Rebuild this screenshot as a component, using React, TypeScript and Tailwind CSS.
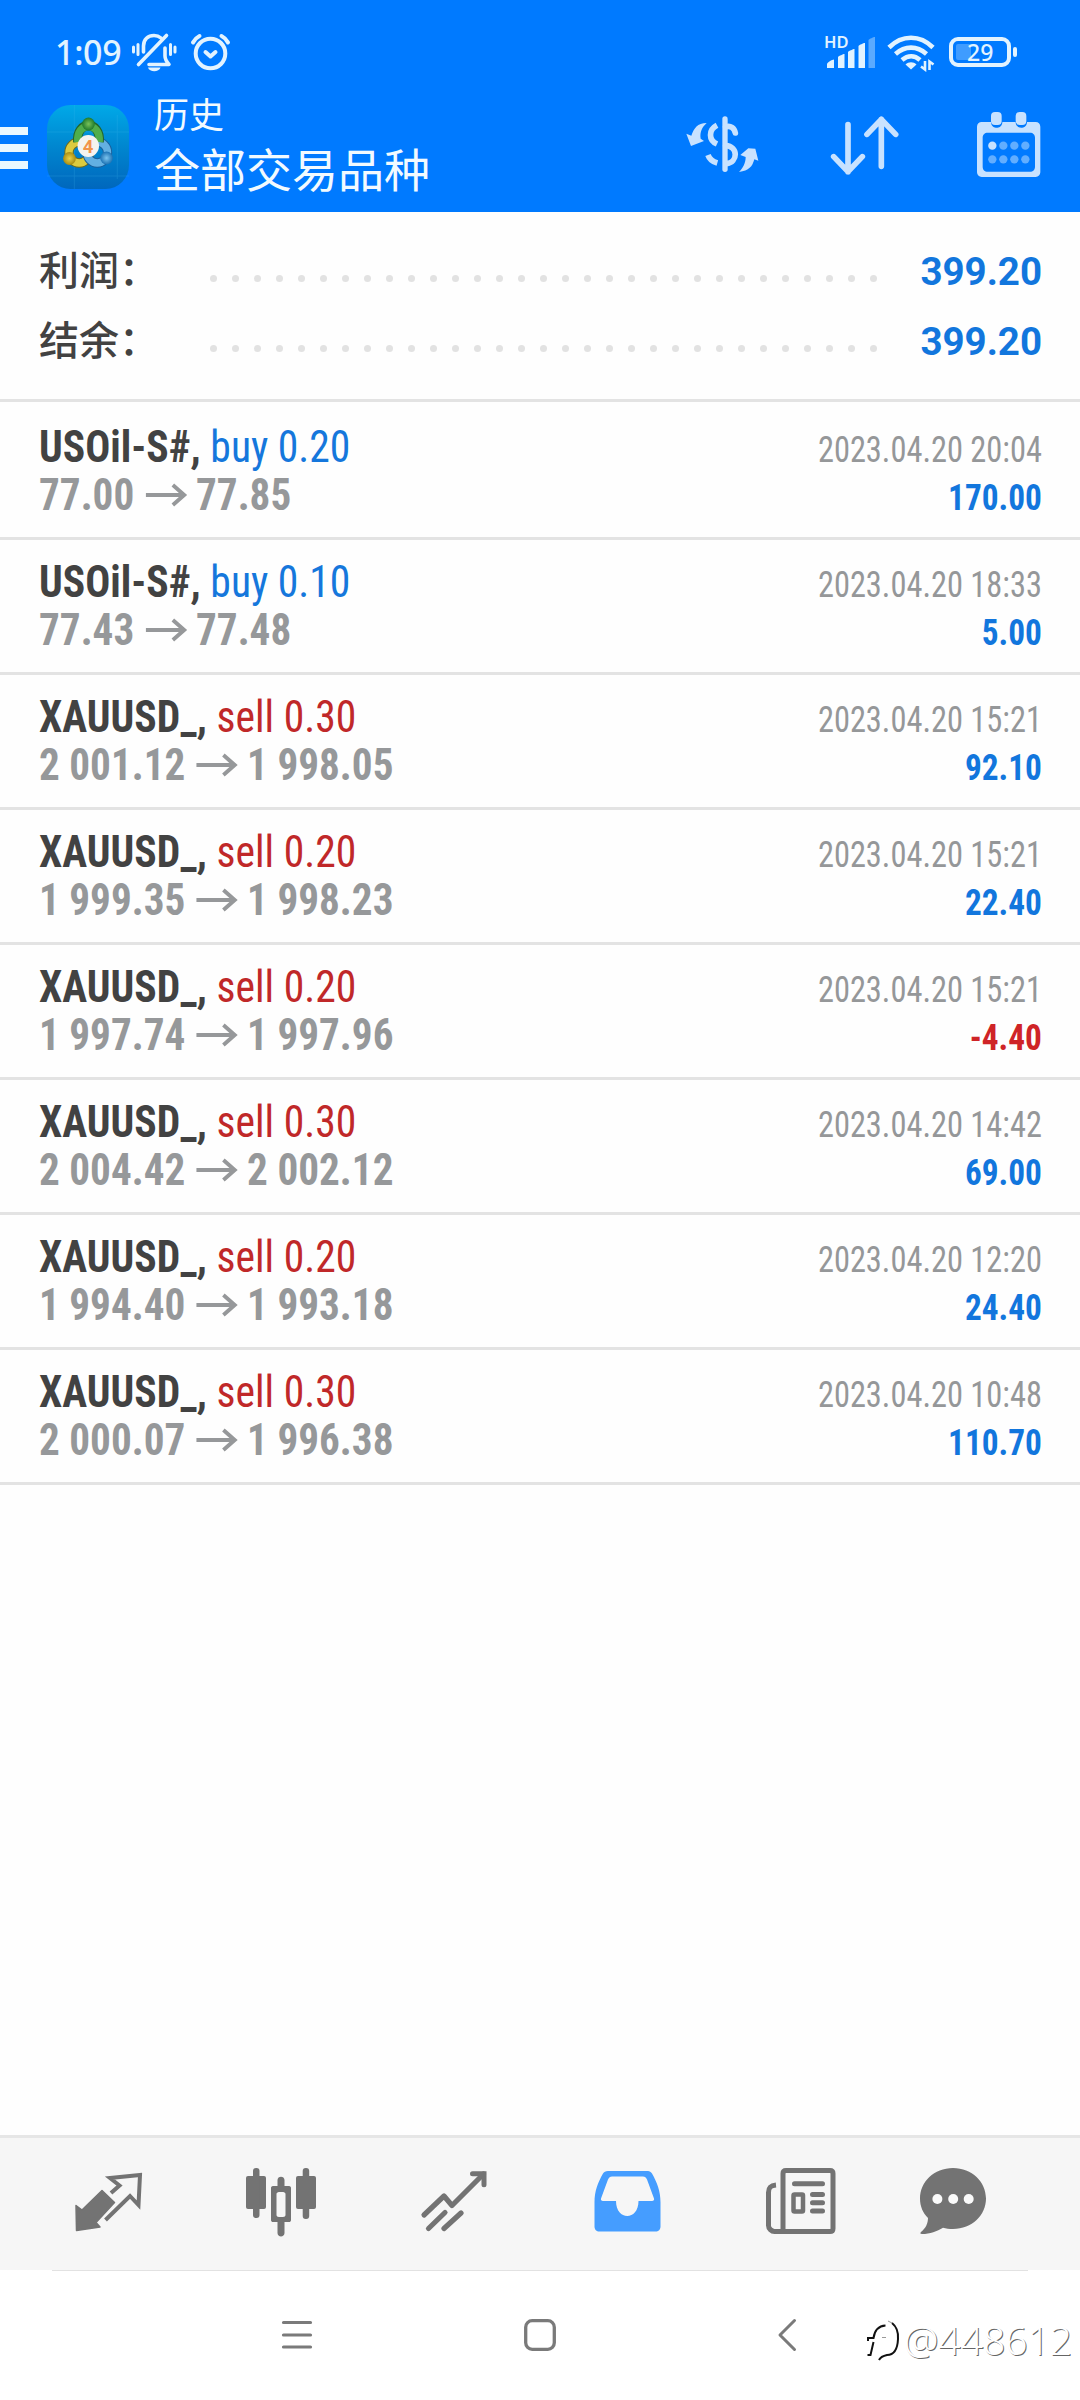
import React from "react";

interface Deal {
  symbol: string;
  side: "buy" | "sell";
  volume: string;
  open: string;
  close: string;
  time: string;
  profit: string;
}

const deals: Deal[] = [
  { symbol: "USOil-S#", side: "buy", volume: "0.20", open: "77.00", close: "77.85", time: "2023.04.20 20:04", profit: "170.00" },
  { symbol: "USOil-S#", side: "buy", volume: "0.10", open: "77.43", close: "77.48", time: "2023.04.20 18:33", profit: "5.00" },
  { symbol: "XAUUSD_", side: "sell", volume: "0.30", open: "2 001.12", close: "1 998.05", time: "2023.04.20 15:21", profit: "92.10" },
  { symbol: "XAUUSD_", side: "sell", volume: "0.20", open: "1 999.35", close: "1 998.23", time: "2023.04.20 15:21", profit: "22.40" },
  { symbol: "XAUUSD_", side: "sell", volume: "0.20", open: "1 997.74", close: "1 997.96", time: "2023.04.20 15:21", profit: "-4.40" },
  { symbol: "XAUUSD_", side: "sell", volume: "0.30", open: "2 004.42", close: "2 002.12", time: "2023.04.20 14:42", profit: "69.00" },
  { symbol: "XAUUSD_", side: "sell", volume: "0.20", open: "1 994.40", close: "1 993.18", time: "2023.04.20 12:20", profit: "24.40" },
  { symbol: "XAUUSD_", side: "sell", volume: "0.30", open: "2 000.07", close: "1 996.38", time: "2023.04.20 10:48", profit: "110.70" },
];

const summary = [
  { label: "利润：", value: "399.20" },
  { label: "结余：", value: "399.20" },
];

const StatusBar = () => (
  <div className="flex h-[92px] items-start text-[#e2f3ff]">
    <span className="ml-[55px] mt-[28px] w-[75px] font-['Noto_Sans',sans-serif] text-[34px] font-medium leading-[48px] tracking-[-0.3px]">1:09</span>

    {/* Silent bell */}
    <svg className="mt-[32px]" width="48" height="42" viewBox="130 32 48 42" fill="none" stroke="currentColor" strokeWidth="3.6" strokeLinecap="round">
      <path d="M133.500 47v5M138 44.500v10M175 47v5M170.500 44.500v10" strokeWidth="3" />
      <path d="M143.500 52v-6c0-6.500 4.500-10.500 10.500-10.500 3 0 5 .8 7 2.500" />
      <path d="M165 48v8c0 3 1 5 4 8.500h-20" strokeLinejoin="round" />
      <path d="M138.500 64.500 166.500 35.500" />
      <path d="M148 67.500h12.500c-1.500 5-11 5-12.500 0z" fill="currentColor" stroke="none" />
    </svg>

    {/* Alarm */}
    <svg className="ml-[11px] mt-[32px]" width="44" height="42" viewBox="189 32 44 42" fill="none" stroke="currentColor" strokeWidth="4" strokeLinecap="round">
      <circle cx="210.500" cy="53.500" r="14.800" />
      <path d="M193 42.500c1.500-3 3.500-5 6.500-6.500M228 42.500c-1.500-3-3.500-5-6.500-6.500" />
      <path d="m205.500 52 5 4.500 5-4.500" strokeLinejoin="round" />
    </svg>

    <svg className="ml-auto mt-[22px]" width="54" height="48" viewBox="823 22 54 48" fill="currentColor">
      <text x="824" y="48" fontFamily="'Noto Sans', sans-serif" fontSize="16.500" fontWeight="600">HD</text>
      <path d="M827 64c0-1.500 5-4.500 7-4.500V68h-7zM838 57c1-1 5-3 6.500-3v14H838zM848 52c1-1 5-3 6.500-3v19H848zM858.500 46c1-1 4.500-3 6.500-3v25h-6.500z" />
      <path d="M868.500 40c1-1 4.500-3 6.500-3v31h-6.500z" opacity=".4" />
    </svg>

    <svg className="ml-[9px] mt-[32px]" width="50" height="40" viewBox="886 32 50 40" fill="none" stroke="currentColor" strokeWidth="4.600">
      <path d="M889 47.500c13-13 31-13 44 0M895.500 54c9.500-8.500 21.500-8.500 31 0M902 60c6-5 12.500-5 18 0" />
      <path d="M905.500 64.500c3-3 8-3 11 0l-5.500 5z" fill="currentColor" stroke="none" />
      <path d="M925 61v8.500l-4-3M929.500 70v-8.500l4 3" strokeWidth="2.600" />
    </svg>

    <svg className="ml-[11px] mr-[61px] mt-[32px]" width="72" height="38" viewBox="947 32 72 38" fill="currentColor">
      <rect x="951" y="39" width="58" height="26" rx="7" fill="none" stroke="currentColor" strokeWidth="4" />
      <rect x="956" y="44" width="15" height="16" rx="2" opacity=".28" />
      <rect x="1013" y="47" width="4" height="10" rx="2" />
      <text x="967" y="60.500" fontFamily="'Noto Sans', sans-serif" fontSize="23" fontWeight="500">29</text>
    </svg>
  </div>
);

const AppLogo = () => (
  <svg width="82" height="84" viewBox="0 0 84 84" preserveAspectRatio="none">
    <defs>
      <linearGradient id="tile" x1="0" y1="0" x2="0" y2="1">
        <stop offset="0" stopColor="#00a9e8" />
        <stop offset=".5" stopColor="#0086cf" />
        <stop offset="1" stopColor="#0067bd" />
      </linearGradient>
      <radialGradient id="green"><stop offset="0" stopColor="#78c25a" /><stop offset="1" stopColor="#1f7a2c" /></radialGradient>
      <radialGradient id="gold"><stop offset="0" stopColor="#e8d24a" /><stop offset="1" stopColor="#a88c12" /></radialGradient>
      <radialGradient id="sky"><stop offset="0" stopColor="#7cc4ee" /><stop offset="1" stopColor="#1c72b4" /></radialGradient>
    </defs>
    <rect width="84" height="84" rx="24" fill="url(#tile)" />
    <path d="M28 0v84M72 10v64M0 27h84M0 71h84" stroke="#48bdf0" strokeWidth=".8" opacity=".25" />
    <g fill="none" strokeWidth="9.500">
      <circle cx="33" cy="47.500" r="10.500" stroke="#6d6a1c" />
      <circle cx="33" cy="47.500" r="10.500" stroke="#dccb3f" strokeWidth="7.500" />
      <circle cx="51.500" cy="47.500" r="10.500" stroke="#1a5f9a" />
      <circle cx="51.500" cy="47.500" r="10.500" stroke="#63b0e2" strokeWidth="7.500" />
      <path d="M31.500 37c-2-22 24-22 22 0" stroke="#23652c" />
      <path d="M31.500 37c-2-21 24-21 22 0" stroke="#4fae4b" strokeWidth="7.500" />
    </g>
    <circle cx="42.500" cy="19" r="6.500" fill="url(#green)" />
    <circle cx="23" cy="53.500" r="6.500" fill="url(#gold)" />
    <circle cx="61" cy="53" r="6.500" fill="url(#sky)" />
    <circle cx="42.300" cy="41" r="11" fill="#f4f3f0" />
    <text x="42" y="48" textAnchor="middle" fontFamily="Roboto, sans-serif" fontSize="19" fontWeight="700" fill="#f2944a">4</text>
  </svg>
);

const TitleBar = () => (
  <div className="flex h-[120px] items-start text-[#f2faff]">
    <div className="mt-[35px] flex w-[28px] flex-col gap-[9px]">
      <div className="h-[8px] bg-[#eaf8ff]" />
      <div className="h-[8px] bg-[#eaf8ff]" />
      <div className="h-[8px] bg-[#eaf8ff]" />
    </div>
    <div className="ml-[19px] mt-[13px]">
      <AppLogo />
    </div>
    <div className="-mt-[2px] ml-[25px] font-['Noto_Sans_CJK_SC',sans-serif]">
      <div className="text-[35px] leading-[46px]">历史</div>
      <div className="text-[46px] leading-[62px]">全部交易品种</div>
    </div>

    {/* Currency exchange */}
    <svg className="ml-auto mt-[22px]" width="76" height="60" viewBox="134 342 228 180" fill="none" stroke="#c8e2ff" strokeWidth="16" strokeLinecap="round">
      <path d="M254 357v151" />
      <path d="M256 381c14-6 26 3 29 18M256 437c38 2 38 50 2 54" strokeWidth="17" />
      <path d="M230 376c-26 14-26 44 0 56M203 465c4 12 14 20 28 24" strokeWidth="17" strokeLinecap="butt" />
      <path d="M199 369c-28 0-38 16-46 38l-15-6 14 37 39-15-10-7c-3-20 4-34 18-47z" fill="#c8e2ff" stroke="none" />
      <path d="M296 516c30-4 40-16 46-38l12 4-9-36-21-1-24 20 16 6c0 18-8 33-20 45z" fill="#c8e2ff" stroke="none" />
    </svg>

    {/* Sort */}
    <svg className="ml-[68px] mt-[22px]" width="72" height="63" viewBox="568 342 216 189" fill="none" stroke="#c8e2ff" strokeWidth="17" strokeLinecap="round" strokeLinejoin="round">
      <path d="M625 374v141M582 470l43 45 43-45" />
      <path d="M725 499V358M682 403l43-45 43 45" />
    </svg>

    {/* Calendar */}
    <svg className="ml-[74px] mr-[38px] mt-[19px]" width="67" height="69" viewBox="1004 333 201 207" fill="#c8e2ff">
      <path fillRule="evenodd" d="M1024 366h28v2c2 12 10 15 17 15s15-3 17-15v-2h40v2c2 12 10 15 17 15s15-3 17-15v-2h26c8 0 14 6 14 14v137c0 8-6 14-14 14h-162c-8 0-14-6-14-14V380c0-8 6-14 14-14zm18 32c-9 0-15 6-15 15v87c0 9 6 15 15 15h127c9 0 15-6 15-15v-87c0-9-6-15-15-15z" />
      <rect x="1052" y="336" width="32" height="39" rx="12" />
      <rect x="1126" y="336" width="32" height="39" rx="12" />
      <circle cx="1056" cy="437" r="12.500" />
      <g fill="#62aeff">
        <circle cx="1089" cy="437" r="12.500" /><circle cx="1122" cy="437" r="12.500" /><circle cx="1155" cy="437" r="12.500" />
        <circle cx="1056" cy="478" r="12.500" /><circle cx="1089" cy="478" r="12.500" /><circle cx="1122" cy="478" r="12.500" /><circle cx="1155" cy="478" r="12.500" />
      </g>
    </svg>
  </div>
);

const DealRow = ({ deal }: { deal: Deal }) => (
  <div className="flex h-[135px] justify-between border-b-[3px] border-[#e3e3e3] pl-[39px] pr-[38px] font-['Roboto_Condensed',Roboto,sans-serif] [font-stretch:75%] first:h-[138px] first:pt-[3px]">
    <div className="whitespace-nowrap pt-[18px] text-[44px] leading-[48px]">
      <div className="origin-left scale-x-[0.945]">
        <span className="font-bold text-[#424242]">{deal.symbol}, </span>
        <span className={deal.side === "buy" ? "text-[#1577dc]" : "text-[#c02829]"}>
          {deal.side} {deal.volume}
        </span>
      </div>
      <div className="flex origin-left scale-x-[0.936] items-center font-bold text-[#96989a]">
        <span>{deal.open}</span>
        <svg className="ml-[12px] mr-[9px]" width="45" height="24" viewBox="0 0 45 24" fill="none" stroke="currentColor" strokeWidth="4.200">
          <path d="M0 12h41M29 2l12 10-12 10" />
        </svg>
        <span>{deal.close}</span>
      </div>
    </div>
    <div className="whitespace-nowrap pt-[21px] text-right text-[36px] leading-[48px]">
      <div className="origin-right scale-x-[0.9] text-[#959799]">{deal.time}</div>
      <div className={deal.profit.startsWith("-") ? "origin-right scale-x-[0.925] font-bold text-[#cf2427]" : "origin-right scale-x-[0.925] font-bold text-[#1276dd]"}>{deal.profit}</div>
    </div>
  </div>
);

const TabBar = () => (
  <div className="flex h-[135px] items-start border-t-[3px] border-[#e6e6e6] bg-[#f6f6f6] pt-[26px] text-[#737373]">
    {/* Quotes */}
    <svg className="ml-[72px]" width="72" height="74" viewBox="72 2164 72 74">
      <path d="M76 2205.500 82 2210l20-19.500 12.500 12L96 2222.500l4 4.500-23.500 3.500z" fill="currentColor" stroke="currentColor" strokeWidth="1.500" strokeLinejoin="round" />
      <path d="m111 2193 8.500-7.500-9.500-7.500 30-3-1.500 30-8.500-9-24.500 24" fill="none" stroke="currentColor" strokeWidth="4" />
    </svg>
    {/* Charts */}
    <svg className="ml-[100px]" width="74" height="74" viewBox="244 2164 74 74" fill="currentColor">
      <rect x="246" y="2176" width="20" height="33" rx="2" />
      <rect x="253" y="2168" width="6.500" height="50" rx="3" />
      <rect x="296" y="2176" width="20" height="33" rx="2" />
      <rect x="302.700" y="2168" width="6.500" height="51" rx="3" />
      <path fillRule="evenodd" d="M273 2186h4.500v-6c0-4.500 7-4.500 7 0v6h4.500c1.500 0 2 1 2 2v32c0 1.500-1 2-2 2h-4.500v11c0 4.500-7 4.500-7 0v-11H273c-1 0-2-.5-2-2v-32c0-1 .5-2 2-2zm6 6c-1.500 0-2.500 1-2.500 2v21c0 1 1 2 2.500 2h4c1.500 0 2.500-1 2.500-2v-21c0-1-1-2-2.500-2z" />
    </svg>
    {/* Trade */}
    <svg className="ml-[102px]" width="70" height="74" viewBox="420 2164 70 74" fill="none" stroke="currentColor" strokeWidth="5.200" strokeLinecap="round" strokeLinejoin="round">
      <path d="m424 2215 20-19 8 9.500 31.500-31.500" />
      <path d="M472.500 2173.700h11.500v11" strokeLinejoin="miter" strokeWidth="5" />
      <path d="m428.500 2228.500 16.500-16M444 2228.500l17-15.500" />
    </svg>
    {/* History */}
    <svg className="ml-[102px]" width="70" height="74" viewBox="592 2164 70 74" fill="#459dff">
      <path fillRule="evenodd" d="M608 2171h40c1.500 0 3 1 4 2.500 5 9 8.500 17 8.500 29v24c0 3-2 5-5 5h-56c-3 0-5-2-5-5v-24c0-12 3.500-20 8.500-29 1-1.500 2.500-2.500 5-2.500zm4 5.500c-2 0-3 1-4 3l-7 19c-.5 1.500.5 2.500 2 2.500h13c0 20 22.500 20 22.500 0H652c1.500 0 2.500-1 2-2.500l-7-19c-1-2-2-3-4-3z" />
    </svg>
    {/* News */}
    <svg className="ml-[102px]" width="74" height="74" viewBox="764 2164 74 74" fill="none" stroke="currentColor" strokeWidth="5">
      <path d="M783 2231.500v-58c0-2 1-3 3-3h44c2 0 3 1 3 3v55c0 2-1 3-3 3h-55.500c-3 0-6-3-6-6v-33c0-5 2-7 7.500-7.500" />
      <path d="M794.500 2183.700h28M812.500 2194.500h10M812.500 2202.800h10M812.500 2211h10" strokeLinecap="round" />
      <rect x="793.500" y="2194.500" width="9.500" height="17" rx="1" strokeWidth="4.500" />
    </svg>
    {/* Messages */}
    <svg className="ml-[79px]" width="72" height="74" viewBox="917 2164 72 74" fill="currentColor">
      <path d="M953 2168c19 0 33 14 33 30.500s-14 30.500-33 30.500c-4 0-7-.5-10-1.300-6 3.500-13 6.300-21 6.300-2 0-2-1-1-2 5-4 7-9 7-14-5-5-8-11.500-8-19.500 0-16.500 14-30.500 33-30.500z" />
      <g fill="#fafafa">
        <circle cx="937.400" cy="2199" r="5" /><circle cx="953.200" cy="2199" r="5" /><circle cx="968.700" cy="2199" r="5" />
      </g>
    </svg>
  </div>
);

const SystemNav = () => (
  <div className="relative h-[130px] bg-white">
    <div className="mx-[52px] h-px bg-[#e2e2e2]" />
    <div className="flex items-center pl-[280px] pt-[46px] text-[#7a7a7a]">
      <svg width="34" height="36" viewBox="0 0 34 36" stroke="currentColor" strokeWidth="3.200" strokeLinecap="round">
        <path d="M3.500 5.500h27M3.500 18h27M3.500 30h27" />
      </svg>
      <svg className="ml-[208px]" width="36" height="36" viewBox="0 0 36 36" fill="none" stroke="currentColor" strokeWidth="3.300">
        <rect x="3.700" y="3.700" width="28.600" height="28.600" rx="6.500" />
      </svg>
      <svg className="ml-[216px]" width="26" height="36" viewBox="0 0 26 36" fill="none" stroke="currentColor" strokeWidth="3" strokeLinecap="round" strokeLinejoin="round">
        <path d="M20.500 3.500 6 18l14.500 14.500" />
      </svg>
    </div>
    {/* Account watermark */}
    <div className="absolute right-[8px] top-[45px] flex items-center">
      <svg width="36" height="46" viewBox="866 2321 36 46" fill="none" strokeWidth="2">
        <path d="M868 2345v-3h5.500c1-7 4-12 12-12.500M873.500 2346l-3 13h-3" stroke="#111" />
        <path d="M892 2327c5 4 6.500 9 6 16-.5 11-4 16-11 16-4.500 1-6.500 2-8 5" stroke="#111" />
        <path d="M882 2341.500h4M888 2325l4 2" stroke="#999" strokeWidth="1" />
      </svg>
      <span className="ml-[2px] font-['Noto_Sans',sans-serif] text-[39px] font-light leading-[50px] text-white [text-shadow:1px_1px_0_#666]">@448612</span>
    </div>
  </div>
);

export default function App() {
  return (
    <div className="flex h-[2400px] w-[1080px] flex-col overflow-hidden bg-[#fefefe]">
      <header className="h-[212px] bg-[#007aff]">
        <StatusBar />
        <TitleBar />
      </header>

      {/* Totals */}
      <section className="flex h-[190px] flex-col border-b-[3px] border-[#e3e3e3] pl-[39px] pr-[38px] pt-[24px]">
        {summary.map((item) => (
          <div key={item.label} className="flex h-[70px] items-start">
            <span className="-mt-[3px] w-[171px] whitespace-nowrap font-['Noto_Sans_CJK_SC',sans-serif] text-[40px] font-medium leading-[70px] text-[#424242]">{item.label}</span>
            <div className="mt-[39px] flex gap-[15px]">
              {Array.from({ length: 31 }, (_, i) => (
                <i key={i} className="size-[7px] rounded-full bg-[#e2e2e2]" />
              ))}
            </div>
            <span className="ml-auto mt-[1px] font-['Roboto',sans-serif] text-[38.5px] font-bold leading-[70px] text-[#1276dd]">{item.value}</span>
          </div>
        ))}
      </section>

      <main className="flex-1">
        {deals.map((deal, i) => (
          <DealRow key={i} deal={deal} />
        ))}
      </main>

      <TabBar />
      <SystemNav />
    </div>
  );
}
